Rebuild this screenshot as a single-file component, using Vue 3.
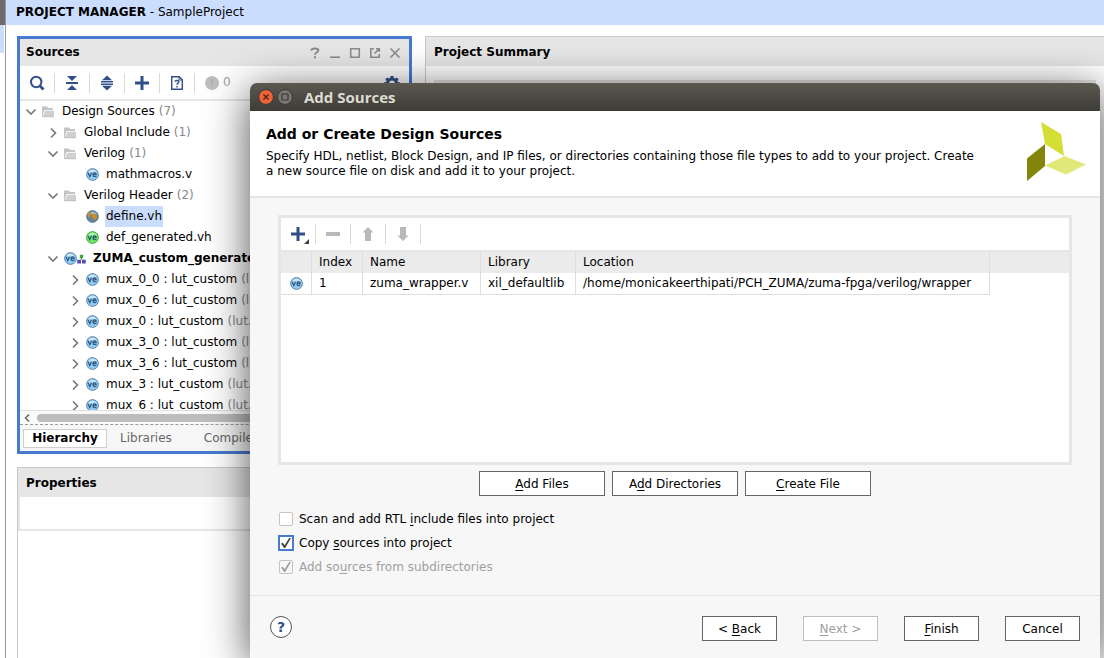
<script setup>
import { ref } from 'vue'

const rows = [
  { level: 0, open: true, icon: 'folder', name: 'Design Sources', note: '(7)' },
  { level: 1, open: false, icon: 'folder', name: 'Global Include', note: '(1)' },
  { level: 1, open: true, icon: 'folder', name: 'Verilog', note: '(1)' },
  { level: 2, icon: 've', name: 'mathmacros.v' },
  { level: 1, open: true, icon: 'folder', name: 'Verilog Header', note: '(2)' },
  { level: 2, icon: 'globe', name: 'define.vh', selected: true },
  { level: 2, icon: 'green', name: 'def_generated.vh' },
  { level: 1, open: true, icon: 'top', name: 'ZUMA_custom_generated', bold: true },
  ...['0_0', '0_6', '0', '3_0', '3_6', '3', '6'].map((n) => ({
    level: 2, open: false, icon: 've', name: `mux_${n} : lut_custom`, note: '(lut.v)',
  })),
]

const scan = ref(false)
const copy = ref(true)
const subdirs = ref(true)
</script>

<template>
  <div class="app">
    <aside class="rail"><div class="rail-dark"></div><div class="rail-blue"></div></aside>
    <main class="main">
      <header class="topbar"><b>PROJECT MANAGER</b> - SampleProject</header>
      <div class="workspace">
        <div class="left">
          <section class="panel sources">
            <div class="panel-head">
              <h2>Sources</h2>
              <div class="win-tools">
                <button aria-label="Help"><svg width="12" height="12" viewBox="0 0 12 12"><path d="M2.2 3.6C2.6 .9 9.4 .7 9.4 3.6C9.4 5.3 6 5.3 6 7.8M6 9.2V11.2" /></svg></button>
                <button aria-label="Minimize"><svg width="12" height="12" viewBox="0 0 12 12"><path d="M1 10.2H11" /></svg></button>
                <button aria-label="Maximize"><svg width="12" height="12" viewBox="0 0 12 12"><path d="M1.7 1.7H10.3V10.3H1.7Z" /></svg></button>
                <button aria-label="Float"><svg width="12" height="12" viewBox="0 0 12 12"><path d="M5 1.8H1.8V10.2H10.2V7M5.5 6.5L9.6 2.4M7 1.7H10.3V5" /></svg></button>
                <button aria-label="Close"><svg width="12" height="12" viewBox="0 0 12 12"><path d="M1.5 1.5L10.5 10.5M10.5 1.5L1.5 10.5" /></svg></button>
              </div>
            </div>
            <div class="toolbar">
              <button aria-label="Search"><svg width="16" height="16" viewBox="0 0 16 16"><circle cx="7.2" cy="7" r="5.2" fill="none" stroke="#31508a" stroke-width="2" /><path d="M11 11L14.5 14.5" stroke="#31508a" stroke-width="2.8" /></svg></button>
              <button aria-label="Collapse all"><svg width="16" height="16" viewBox="0 0 16 16" fill="#31508a"><path d="M3 1H13L8 6ZM3 15H13L8 10ZM2 7H14V9H2Z" /></svg></button>
              <button aria-label="Expand all"><svg width="16" height="16" viewBox="0 0 16 16" fill="#31508a"><path d="M8 .5L13 5.2H3ZM8 15.5L13 10.8H3ZM2 6H14V7.6H2ZM2 8.4H14V10H2Z" /></svg></button>
              <button aria-label="Add sources"><svg width="16" height="16" viewBox="0 0 16 16" fill="#31508a"><path d="M6.5 1H9.5V6.5H15V9.5H9.5V15H6.5V9.5H1V6.5H6.5Z" /></svg></button>
              <button aria-label="Report"><svg width="16" height="16" viewBox="0 0 16 16" fill="none" stroke="#31508a"><path d="M2.7 1.7H10.3L13.3 4.7V14.3H2.7Z" stroke-width="1.4" /><path d="M10 1.7V5H13.3" /><path d="M6 6.7C6.3 4.8 10 5 9.8 7C9.6 8.2 8 8.2 8 9.7M8 11V12.4" stroke-width="1.5" /></svg></button>
              <span class="warn"><svg width="14" height="14" viewBox="0 0 14 14"><circle cx="7" cy="7" r="7" fill="#bfbfbf" /><path d="M7 3V8M7 9.5V11" stroke="#adadad" stroke-width="1.6" /></svg>0</span>
              <button class="gear" aria-label="Settings"><svg width="16" height="16" viewBox="0 0 16 16" fill="#31508a"><path fill-rule="evenodd" d="M6.6 1H9.4L9.8 3L11 3.5L12.7 2.4L14.6 4.3L13.4 6L13.9 7.2H16V9.8L13.9 10.2L13.4 11.4L14.6 13L12.7 15L11 13.9L9.8 14.4L9.4 16H6.6L6.2 14.4L5 13.9L3.3 15L1.4 13L2.6 11.4L2.1 10.2L0 9.8V7.2H2.1L2.6 6L1.4 4.3L3.3 2.4L5 3.5L6.2 3ZM8 5.6A3 3 0 1 0 8 11.6A3 3 0 1 0 8 5.6Z" /></svg></button>
            </div>
            <ul class="tree">
              <li v-for="(r, i) in rows" :key="i" :class="['lv' + r.level, { bold: r.bold }]">
                <span class="twist"><svg v-if="r.open !== undefined" width="12" height="12" viewBox="0 0 12 12"><path v-if="r.open" d="M1.5 3.5L6 8L10.5 3.5" /><path v-else d="M4 1.5L8.5 6L4 10.5" /></svg></span>
                <svg v-if="r.icon === 'folder'" width="13" height="12" viewBox="0 0 13 12"><path d="M0 .5H5L6 2H11V4H2.5L1 8.5V11H0Z" fill="#c4c4c4" /><path d="M3.2 4.8H12V10.8H1Z" fill="#d0d0d0" /><path d="M1 10.2H12V11.2H1Z" fill="#bcbcbc" /></svg>
                <svg v-else width="13" height="13" viewBox="0 0 13 13">
                  <circle cx="6.5" cy="6.5" r="5.9" :fill="r.icon === 'green' ? '#72e868' : r.icon === 'globe' ? '#64839c' : '#92cbf5'" :stroke="r.icon === 'green' ? '#3e9d45' : '#557fa9'" stroke-width=".9" />
                  <path d="M2 4.2Q6.5 -.6 11 4.2Z" fill="#fff" opacity=".5" />
                  <path v-if="r.icon === 'globe'" d="M1.2 4L4 1.5L5.5 3L4.5 6.5L2.5 8ZM6 5.2L8 3.5L10.2 4.2L11.4 6.8L9.5 10.5L7.5 8.5L6.2 9Z" fill="#c98c2a" />
                  <path v-else d="M2 4.7L3.8 8.7L5.5 4.7M7 6.7H10.2C10.2 4.2 7 4.2 7 6.7C7 9.1 9.2 9.1 10.4 8.1" fill="none" stroke="#264d70" stroke-width="1.1" />
                </svg>
                <svg v-if="r.icon === 'top'" width="10" height="10" viewBox="0 0 10 10"><path d="M4.5 3V6" fill="none" stroke="#777" /><path d="M2.8 .8H6.2V4.2H2.8Z" fill="#3aa53a" /><path d="M.2 5.8H4V9.6H.2ZM5 5.8H8.8V9.6H5Z" fill="#5350b8" /></svg>
                <span class="label" :class="{ selected: r.selected }">{{ r.name }}</span>
                <span v-if="r.note" class="note">{{ r.note }}</span>
              </li>
            </ul>
            <div class="hscroll"><svg width="8" height="10" viewBox="0 0 8 10"><path d="M6 1.5L2.5 5L6 8.5" /></svg><div class="thumb"></div></div>
            <nav class="tabs"><button class="active">Hierarchy</button><button>Libraries</button><button>Compile Order</button></nav>
          </section>
          <section class="panel props">
            <div class="panel-head"><h2>Properties</h2></div>
            <div class="props-bar"></div>
          </section>
        </div>
        <section class="panel summary">
          <div class="panel-head"><h2>Project Summary</h2></div>
          <div class="summary-body"></div>
        </section>
      </div>
    </main>

    <div class="dialog" role="dialog" aria-labelledby="dlg-title">
      <div class="titlebar">
        <button aria-label="Close"><svg width="16" height="16" viewBox="0 0 16 16"><circle cx="8" cy="8" r="7.4" fill="#ee6238" stroke="#393834" /><path d="M5.5 5.5L10.5 10.5M10.5 5.5L5.5 10.5" stroke="#49251a" stroke-width="1.4" /></svg></button>
        <button aria-label="Maximize"><svg width="16" height="16" viewBox="0 0 16 16"><circle cx="8" cy="8" r="7.4" fill="#7a7871" stroke="#393834" /><path d="M5 5H11V11H5Z" fill="none" stroke="#383733" stroke-width="1.2" /></svg></button>
        <span id="dlg-title">Add Sources</span>
      </div>
      <div class="intro">
        <div class="intro-text">
          <h1>Add or Create Design Sources</h1>
          <p>Specify HDL, netlist, Block Design, and IP files, or directories containing those file types to add to your project. Create a new source file on disk and add it to your project.</p>
        </div>
        <svg width="60" height="60" viewBox="0 0 60 60"><path d="M15 0L35 12L38 34L19 22Z" fill="#d3df35" /><path d="M1 36.5L19 22V44L1 59Z" fill="#84860b" /><path d="M19 43.5L38.5 34L60 42.5L40 52.5Z" fill="#e1e877" /></svg>
      </div>
      <div class="body">
        <div class="filebox">
          <div class="toolbar">
            <button aria-label="Add"><svg width="22" height="20" viewBox="0 0 22 20"><path d="M9.5 3H12.5V8.5H18V11.5H12.5V17H9.5V11.5H4V8.5H9.5Z" fill="#31508a" /><path d="M22 15V20H17Z" fill="#3d3d3d" /></svg></button>
            <button aria-label="Remove" disabled><svg width="16" height="16" viewBox="0 0 16 16"><path d="M1 6H15V10H1Z" fill="#b9b9b9" /></svg></button>
            <button aria-label="Move up" disabled><svg width="16" height="16" viewBox="0 0 16 16"><path d="M8 1L13.5 6.5H11V15H5V6.5H2.5Z" fill="#b9b9b9" /></svg></button>
            <button aria-label="Move down" disabled><svg width="16" height="16" viewBox="0 0 16 16"><path d="M8 15L13.5 9.5H11V1H5V9.5H2.5Z" fill="#b9b9b9" /></svg></button>
          </div>
          <table>
            <thead><tr><th class="c-icon"></th><th class="c-idx">Index</th><th class="c-name">Name</th><th class="c-lib">Library</th><th class="c-loc">Location</th><th></th></tr></thead>
            <tbody><tr>
              <td class="c-icon"><svg width="13" height="13" viewBox="0 0 13 13"><circle cx="6.5" cy="6.5" r="5.9" fill="#92cbf5" stroke="#557fa9" stroke-width=".9" /><path d="M2 4.2Q6.5 -.6 11 4.2Z" fill="#fff" opacity=".5" /><path d="M2 4.7L3.8 8.7L5.5 4.7M7 6.7H10.2C10.2 4.2 7 4.2 7 6.7C7 9.1 9.2 9.1 10.4 8.1" fill="none" stroke="#264d70" stroke-width="1.1" /></svg></td>
              <td>1</td><td>zuma_wrapper.v</td><td>xil_defaultlib</td><td>/home/monicakeerthipati/PCH_ZUMA/zuma-fpga/verilog/wrapper</td><td class="rest"></td>
            </tr></tbody>
          </table>
        </div>
        <div class="actions">
          <button class="btn"><u>A</u>dd Files</button>
          <button class="btn">A<u>d</u>d Directories</button>
          <button class="btn"><u>C</u>reate File</button>
        </div>
        <div class="checks">
          <label><input v-model="scan" type="checkbox" /><span>Scan and add RTL <u>i</u>nclude files into project</span></label>
          <label><input v-model="copy" class="focus" type="checkbox" /><span>Copy <u>s</u>ources into project</span></label>
          <label class="off"><input v-model="subdirs" type="checkbox" disabled /><span>Add so<u>u</u>rces from subdirectories</span></label>
        </div>
      </div>
      <footer class="foot">
        <button class="help" aria-label="Help">?</button>
        <div class="nav">
          <button class="btn">&lt; <u>B</u>ack</button>
          <button class="btn" disabled><u>N</u>ext &gt;</button>
          <button class="btn"><u>F</u>inish</button>
          <button class="btn">Cancel</button>
        </div>
      </footer>
    </div>
  </div>
</template>

<style>
body { margin: 0; overflow: hidden; }
</style>

<style scoped>
.app { position: relative; display: flex; height: 100vh; overflow: hidden; background: #fff; color: #000; font: 12px/15px "DejaVu Sans", sans-serif; }
.app * { box-sizing: border-box; }
button { font: inherit; color: inherit; background: none; border: 0; padding: 0; margin: 0; }
svg { display: block; flex: none; }
h1, h2, p, ul { margin: 0; padding: 0; }
h2 { font-size: 12px; line-height: 15px; }
u { text-underline-offset: 2px; }

.rail { flex: none; width: 6px; border-right: 1px solid #9b9b9b; }
.rail-dark { height: 25px; background: #6b6b6b; }
.rail-blue { height: 28px; width: 4px; background: #cbddfe; }
.main { flex: 1; min-width: 0; display: flex; flex-direction: column; }
.topbar { height: 25px; padding: 5px 10px; background: #cbddfe; }
.workspace { flex: 1; min-height: 0; display: grid; grid-template-columns: 395px 1fr; gap: 13px; padding: 11px 0 0 11px; }
.left { display: flex; flex-direction: column; gap: 13px; min-height: 0; }
.panel { display: flex; flex-direction: column; min-width: 0; background: #fff; }
.panel-head { display: flex; align-items: center; justify-content: space-between; background: #e6e6e6; height: 27px; padding: 0 8px 0 6px; flex: none; }
.sources { height: 418px; flex: none; border: 3px solid #477bcf; }
.win-tools { display: flex; gap: 8px; }
.win-tools svg { fill: none; stroke: #8c8c8c; stroke-width: 1.6; }
.win-tools button:first-child svg { stroke-width: 2; }

.toolbar { display: flex; align-items: center; height: 35px; flex: none; border-bottom: 2px solid #e6e6e6; }
.toolbar button { width: 35px; height: 20px; display: grid; place-items: center; border-right: 1px solid #d9d9d9; }
.warn { display: flex; align-items: center; gap: 4px; padding-left: 10px; color: #a0a0a0; }
.toolbar .gear { margin-left: auto; border: 0; }

.tree { flex: 1; min-height: 0; overflow: hidden; list-style: none; }
.tree li { display: flex; align-items: center; height: 21px; white-space: nowrap; padding-left: 5px; }
.tree li.lv1 { padding-left: 27px; }
.tree li.lv2 { padding-left: 49px; }
.tree .bold { font-weight: bold; }
.twist { width: 12px; margin-right: 5px; flex: none; }
.twist svg { fill: none; stroke: #777; stroke-width: 1.6; }
.label { margin-left: 6px; padding: 3px 1px; }
.bold .label { margin-left: 5px; }
.selected { background: #cbddfe; }
.note { margin-left: 3px; color: #888; }
.hscroll { height: 14px; flex: none; display: flex; align-items: center; gap: 6px; padding-left: 3px; border-top: 1px solid #e0e0e0; background: #fafafa; }
.hscroll svg { fill: none; stroke: #666; stroke-width: 1.5; }
.thumb { flex: 1; height: 8px; border-radius: 4px; background: #bdbdbd; }
.tabs { height: 27px; flex: none; display: flex; align-items: center; padding: 0 3px; border-top: 1px dashed #999; background: #f7f7f7; }
.tabs button { height: 19px; padding: 0 13px; margin-right: 6px; color: #666; }
.tabs .active { width: 84px; border: 1px solid #cfcfcf; background: #fff; color: #000; font-weight: bold; padding: 0; margin-right: 0; }

.props, .summary { border: 1px solid #c9c9c9; border-width: 1px 0 0 1px; }
.props { flex: 1; }
.props .panel-head, .summary .panel-head { height: 29px; padding: 1px 8px 0; }
.props-bar { height: 34px; border: solid #e6e6e6; border-width: 0 0 2px 2px; }
.summary-body { flex: 1; border: 2px solid #e6e6e6; margin: 14px 8px; background: #eee; }

.dialog { position: absolute; left: 250px; right: 4px; top: 83px; bottom: 0; display: flex; flex-direction: column; background: #f7f7f7; border-radius: 7px 7px 0 0; box-shadow: 0 8px 44px rgba(0, 0, 0, .7); }
.titlebar { display: flex; align-items: center; gap: 3px; height: 28px; flex: none; padding: 0 8px; border-radius: 7px 7px 0 0; background: linear-gradient(#5b5850, #3d3c37); color: #dfdbd2; }
#dlg-title { margin-left: 8px; font: bold 15px/18px "Open Sans", sans-serif; }
.intro { display: flex; justify-content: space-between; height: 87px; flex: none; background: #fff; border-bottom: 2px solid #e6e6e6; padding: 11px 14px 0 16px; }
.intro-text { max-width: 715px; }
h1 { margin-top: 1px; font-size: 14px; line-height: 22px; }
p { margin-top: 4px; line-height: 15px; }
.body { flex: 1; display: flex; flex-direction: column; padding: 17px 28px 0; }
.filebox { height: 250px; flex: none; background: #fff; border: 3px solid #e6e6e6; overflow: hidden; }
.filebox .toolbar { height: 34px; }
table { width: 100%; border-collapse: separate; border-spacing: 0; table-layout: fixed; }
th, td { height: 21px; padding: 0 7px; text-align: left; font-weight: normal; white-space: nowrap; border-right: 1px solid #dedede; }
th { background: #ebebeb; }
td { border-bottom: 1px solid #dedede; height: 22px; }
th:last-child, td.rest { border: 0; }
.c-icon { width: 31px; }
td.c-icon { padding-left: 9px; }
.c-idx { width: 51px; }
.c-name { width: 118px; }
.c-lib { width: 95px; }
.c-loc { width: 414px; }
.actions { display: flex; justify-content: center; gap: 7px; margin-top: 6px; }
.btn { height: 25px; min-width: 75px; padding-top: 1px; border: 1px solid #666; background: #fff; }
.btn:disabled { border-color: #bdbdbd; color: #a0a0a0; }
.actions .btn { width: 126px; }
.checks { display: flex; flex-direction: column; margin-top: 11px; }
.checks label { display: flex; align-items: center; gap: 5px; height: 24px; }
.off { color: #a0a0a0; }
input { appearance: none; width: 14px; height: 14px; margin: 1px; display: grid; place-items: center; background: #fff; border: 1px solid #c4c4c4; border-radius: 2px; color: #444; }
input.focus { width: 16px; height: 16px; margin: 0; border: 2px solid #477bcf; border-radius: 0; }
input:disabled { color: #a0a0a0; background: #f7f7f7; }
input:checked::after { content: ""; width: 10px; height: 10px; background: currentColor; clip-path: polygon(0 55%, 18% 48%, 36% 72%, 82% 0, 100% 0, 42% 100%, 30% 100%); }
.foot { display: flex; align-items: flex-start; justify-content: space-between; height: 63px; flex: none; border-top: 1px solid #e3e3e3; padding: 20px 20px 0; }
.help { width: 22px; height: 22px; border: 1px solid #555; border-radius: 50%; background: #fff; color: #31508a; font: bold 14px/20px "DejaVu Sans", sans-serif; }
.nav { display: flex; gap: 26px; }
</style>
